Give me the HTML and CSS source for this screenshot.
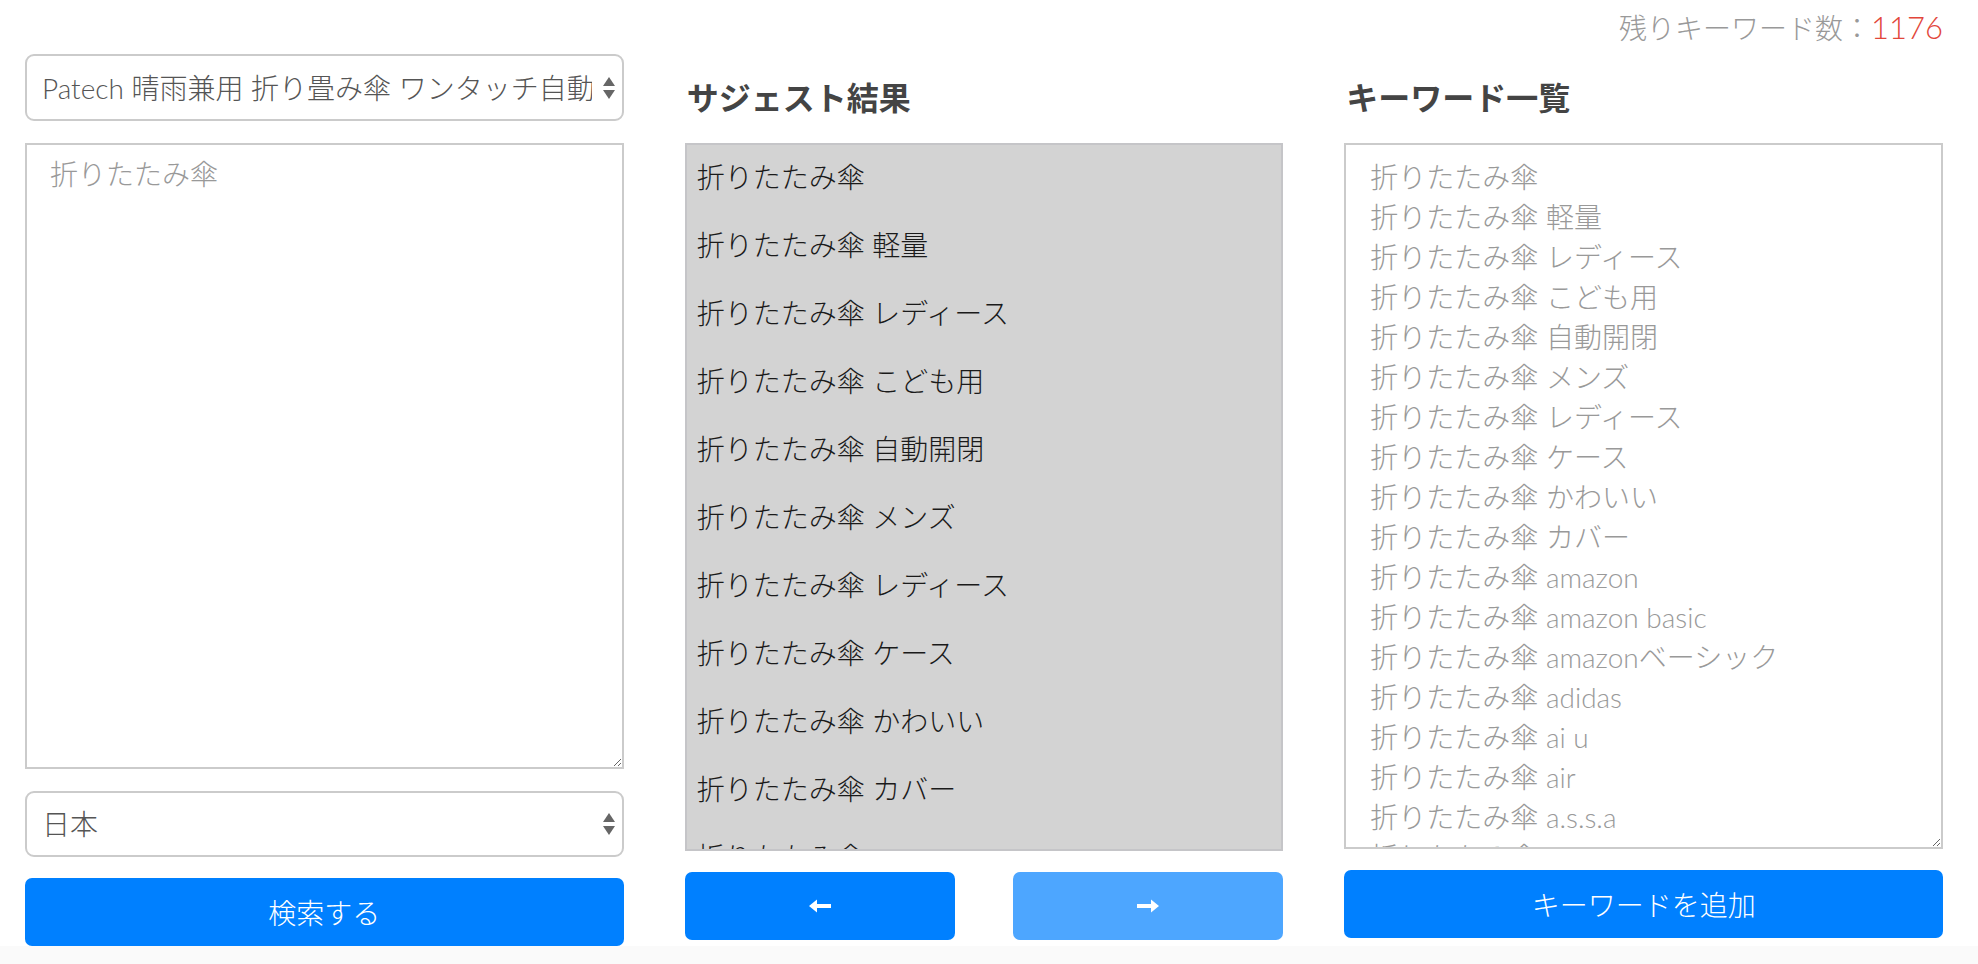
FILE: index.html
```html
<!DOCTYPE html>
<html lang="ja">
<head>
<meta charset="utf-8">
<title>キーワード</title>
<link rel="stylesheet" href="styles.css">
</head>
<body>
<div class="page">
  <div class="topbar">
    <span class="remain">残りキーワード数：<span class="remain-num">1176</span></span>
  </div>
  <div class="columns">
    <div class="col">
      <div class="select-wrap select-product">
        <select class="select"><option>Patech 晴雨兼用 折り畳み傘 ワンタッチ自動開閉 軽量 撥水</option></select>
        <span class="select-arrows"><svg width="12" height="22" viewBox="0 0 12 22"><path d="M6 0 L12 9 L0 9 Z" fill="#666"/><path d="M0 13 L12 13 L6 22 Z" fill="#666"/></svg></span>
      </div>
      <textarea class="seed" placeholder="折りたたみ傘"></textarea>
      <div class="select-wrap select-country">
        <select class="select"><option>日本</option></select>
        <span class="select-arrows"><svg width="12" height="22" viewBox="0 0 12 22"><path d="M6 0 L12 9 L0 9 Z" fill="#666"/><path d="M0 13 L12 13 L6 22 Z" fill="#666"/></svg></span>
      </div>
      <button class="btn btn-primary btn-search">検索する</button>
    </div>
    <div class="col">
      <h2 class="col-title">サジェスト結果</h2>
      <ul class="suggest-list">
        <li class="suggest-item">折りたたみ傘</li>
        <li class="suggest-item">折りたたみ傘 軽量</li>
        <li class="suggest-item">折りたたみ傘 レディース</li>
        <li class="suggest-item">折りたたみ傘 こども用</li>
        <li class="suggest-item">折りたたみ傘 自動開閉</li>
        <li class="suggest-item">折りたたみ傘 メンズ</li>
        <li class="suggest-item">折りたたみ傘 レディース</li>
        <li class="suggest-item">折りたたみ傘 ケース</li>
        <li class="suggest-item">折りたたみ傘 かわいい</li>
        <li class="suggest-item">折りたたみ傘 カバー</li>
        <li class="suggest-item">折りたたみ傘 amazon</li>
      </ul>
      <div class="pager">
        <button class="btn btn-primary pager-btn" aria-label="前へ"><svg width="22" height="14" viewBox="0 0 22 14"><path d="M0 7 L8 0.5 L8 5 L22 5 L22 9 L8 9 L8 13.5 Z" fill="#fff"/></svg></button>
        <button class="btn btn-light pager-btn" aria-label="次へ"><svg width="22" height="14" viewBox="0 0 22 14"><path d="M22 7 L14 0.5 L14 5 L0 5 L0 9 L14 9 L14 13.5 Z" fill="#fff"/></svg></button>
      </div>
    </div>
    <div class="col">
      <h2 class="col-title">キーワード一覧</h2>
      <textarea class="keywords" readonly>折りたたみ傘
折りたたみ傘 軽量
折りたたみ傘 レディース
折りたたみ傘 こども用
折りたたみ傘 自動開閉
折りたたみ傘 メンズ
折りたたみ傘 レディース
折りたたみ傘 ケース
折りたたみ傘 かわいい
折りたたみ傘 カバー
折りたたみ傘 amazon
折りたたみ傘 amazon basic
折りたたみ傘 amazonベーシック
折りたたみ傘 adidas
折りたたみ傘 ai u
折りたたみ傘 air
折りたたみ傘 a.s.s.a
折りたたみ傘 blunt
折りたたみ傘 bts</textarea>
      <button class="btn btn-primary btn-add">キーワードを追加</button>
    </div>
  </div>
</div>
<div class="footer-band"></div>
</body>
</html>
```

FILE: styles.css
```css
html, body {
  margin: 0;
  padding: 0;
  background: #fff;
}

body {
  font-family: "Lato", "Noto Sans CJK JP", sans-serif;
  font-weight: 300;
  color: #333;
}

.page {
  padding: 0 35px 0 25px;
}

.topbar {
  height: 54px;
  display: flex;
  align-items: center;
  justify-content: flex-end;
}

.remain {
  font-size: 28px;
  color: #999;
}

.remain-num {
  font-size: 31px;
  color: #e2463a;
}

.columns {
  display: grid;
  grid-template-columns: repeat(3, 1fr);
  column-gap: 61px;
}

.col {
  display: flex;
  flex-direction: column;
  min-width: 0;
}

.select-wrap {
  position: relative;
  box-sizing: border-box;
}

.select-product {
  height: 67px;
}

.select-country {
  height: 66px;
  margin-top: 22px;
}

.select {
  -webkit-appearance: none;
  appearance: none;
  width: 100%;
  height: 100%;
  box-sizing: border-box;
  border: 2px solid #cbcbcb;
  border-radius: 9px;
  background: #fff;
  padding: 0 30px 0 15px;
  font-family: "Lato", "Noto Sans CJK JP", sans-serif;
  font-weight: 300;
  font-size: 28px;
  color: #555;
  white-space: nowrap;
  overflow: hidden;
  outline: none;
}

.select-arrows {
  position: absolute;
  right: 9px;
  top: 50%;
  transform: translateY(-50%);
  display: flex;
  pointer-events: none;
}

.seed,
.keywords {
  display: block;
  width: 100%;
  box-sizing: border-box;
  border: 2px solid #cbcbcb;
  border-radius: 0;
  margin: 0;
  font-family: "Lato", "Noto Sans CJK JP", sans-serif;
  font-weight: 300;
  font-size: 28px;
  line-height: 40px;
  color: #999;
  background: #fff;
  outline: none;
  overflow: hidden;
}

.seed {
  height: 626px;
  margin-top: 22px;
  padding: 9px 23px;
}

.seed::placeholder {
  color: #999;
}

.keywords {
  height: 706px;
  padding: 12px 24px;
  white-space: pre;
}

.col-title {
  height: 89px;
  margin: 0;
  padding: 0 0 5px 2px;
  box-sizing: border-box;
  display: flex;
  align-items: center;
  font-family: "Noto Sans CJK JP", sans-serif;
  font-weight: 700;
  font-size: 32px;
  color: #444;
}

.suggest-list {
  list-style: none;
  margin: 0;
  padding: 0;
  height: 708px;
  box-sizing: border-box;
  border: 2px solid #c5c5c8;
  background: #d3d3d3;
  overflow: hidden;
}

.suggest-item {
  height: 68px;
  box-sizing: border-box;
  display: flex;
  align-items: center;
  padding: 0 0 7px 10px;
  font-size: 28px;
  color: #1a1a1a;
  white-space: nowrap;
}

.btn {
  display: flex;
  align-items: center;
  justify-content: center;
  height: 68px;
  border: none;
  border-radius: 7px;
  color: #fff;
  font-family: "Lato", "Noto Sans CJK JP", sans-serif;
  font-weight: 300;
  font-size: 28px;
  padding: 0;
  cursor: pointer;
}

.btn-primary {
  background: #0080ff;
}

.btn-light {
  background: #4da6ff;
}

.btn-search {
  width: 100%;
  margin-top: 21px;
}

.btn-add {
  width: 100%;
  margin-top: 21px;
}

.pager {
  display: flex;
  justify-content: space-between;
  margin-top: 21px;
}

.pager-btn {
  width: 270px;
}

.footer-band {
  position: fixed;
  left: 0;
  right: 0;
  bottom: 0;
  height: 21px;
  background: #fafafa;
  z-index: -1;
}
```
